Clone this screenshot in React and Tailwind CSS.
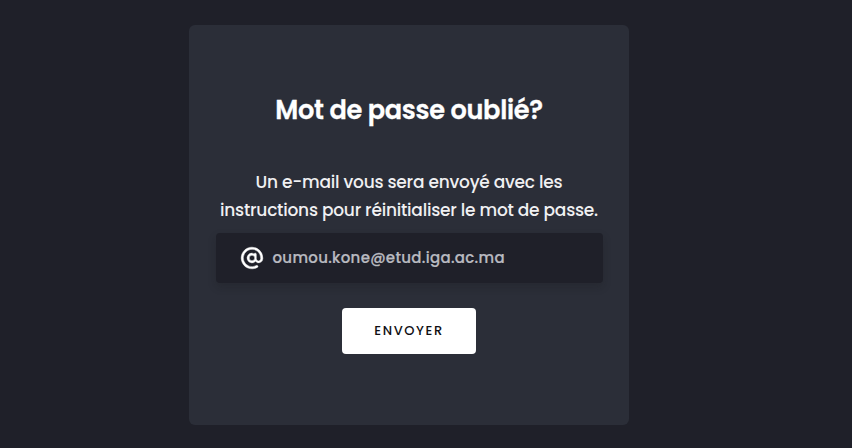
export default function App() {
  return (
    <main className="h-[448px] w-[852px] overflow-hidden bg-[#1f2029] pl-[189px] pt-[25px] font-['Poppins','Open_Sans',sans-serif]">
      <form className="flex h-[400px] w-[440px] flex-col items-center rounded-[6px] bg-[#2b2e38] pt-[66px]">
        <h1 className="whitespace-nowrap text-[25.6px] font-semibold leading-[39px] tracking-[-0.3px] text-white [-webkit-text-stroke:0.3px_white]">Mot de passe oublié?</h1>
        <p className="mt-[38px] whitespace-nowrap text-center text-[17px] font-medium leading-[28px] tracking-[-0.23px] text-[#f0f0f2]">
          <span className="block">Un e-mail vous sera envoyé avec les</span>
          <span className="block">instructions pour réinitialiser le mot de passe.</span>
        </p>
        <div className="mt-[9px] flex h-[50px] w-[387px] items-center rounded-[4px] bg-[#1f2029] pl-[23px] shadow-[0_4px_8px_0_rgba(21,21,21,0.2)]">
          <svg className="h-[26px] w-[26px] text-white" viewBox="0 0 24 24" fill="currentColor" stroke="currentColor" strokeWidth="0.4">
            <path d="M12,2A10,10,0,1,0,17,20.66a1,1,0,0,0,.37-1.36,1,1,0,0,0-1.37-.37A8,8,0,1,1,20,12v.75a2,2,0,0,1-4,0V8.5a1,1,0,0,0-1-1,1,1,0,0,0-1,.79A4.45,4.45,0,0,0,12,7.5,4.5,4.5,0,1,0,15.3,15,3.74,3.74,0,0,0,22,12.75V12A10,10,0,0,0,12,2Zm0,12.5A2.5,2.5,0,1,1,14.5,12,2.5,2.5,0,0,1,12,14.5Z" />
          </svg>
          <span className="ml-[8px] text-[15px] font-medium tracking-[0.3px] text-[#b9bac0] [-webkit-text-stroke:0.2px_#b9bac0]">oumou.kone@etud.iga.ac.ma</span>
        </div>
        <button type="button" className="mt-[25px] h-[46px] w-[134px] rounded-[4px] bg-white text-[13px] font-medium tracking-[1.6px] text-[#101014]">ENVOYER</button>
      </form>
    </main>
  );
}
